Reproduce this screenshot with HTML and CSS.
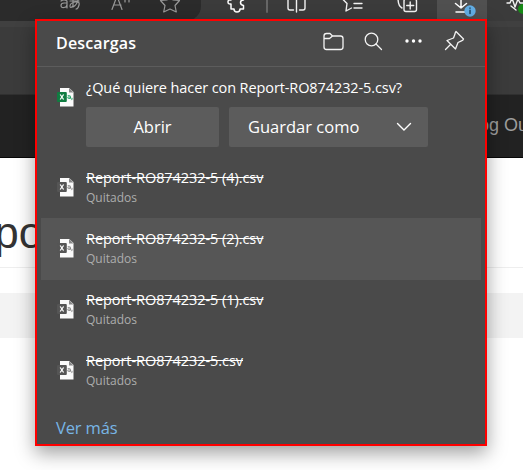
FILE: index.html
```html
<!DOCTYPE html>
<html lang="es">
<head>
<meta charset="utf-8">
<title>Descargas</title>
<link rel="stylesheet" href="styles.css">
</head>
<body>
<svg class="defs" width="0" height="0">
  <defs>
    <symbol id="file" viewBox="0 0 18 20">
      <path d="M3 1h9.200L16.500 5v14.500H3z" fill="#fafafa"/>
      <path d="M12 1v4.500h4.500z" fill="#888"/>
      <rect class="tile" x="0" y="5" width="9.800" height="10" rx="1"/>
      <path d="m3.200 7.500 3.400 5M6.600 7.500l-3.400 5" stroke="#fff" stroke-width="1.300"/>
      <path class="mark" d="M10.700 8.700h2q.8 0 .8.8v1.900h-2q-.8 0-.8-.7t.8-.7h1.800M15 10.800v1.400l-.6.900" fill="none"/>
    </symbol>
  </defs>
</svg>
<div class="browser">
  <div class="toolbar">
    <div class="address"></div>
    <svg class="tools" width="523" height="22" viewBox="0 0 523 22" fill="none" stroke-linecap="round" stroke-linejoin="round">
      <g stroke="#999" stroke-width="1.2">
        <path d="M61 1q3-2 6 0v7M67 3h-3q-3 0-3 2.500t3 2q3 0 3-3M70 1h9M73-2v8q-3 3-3 0t5-4 4 3-3 4M78 0q-1 5-5 7"/>
        <path d="M112 9.500 117-4l5 13.500M114 5h7M125-1v3M129-1v3"/>
        <path d="m170-6 3 6 6.500.500-4.500 5 1.300 6.500L170 9l-6.300 3 1.300-6.500-4.500-5L167 0z"/>
      </g>
      <path d="M231-2v2q-3-.500-3 2t3 2v5h3q0 3 3 3t3-3h3.500V5.500q-3-.500-3-3t3-2.500v-2" stroke="#fff" stroke-width="1.500"/>
      <path d="M267-2v14" stroke="#666" stroke-width="2"/>
      <g stroke="#f2f2f2" stroke-width="1.400">
        <path d="M293.500 10H290q-2 0-2-2V-2M299.500 10h3.500q2 0 2-2V-2M296.500-2v14"/>
        <path d="M342.500-1 347 3.500 346 11l5.500-3M353-1h9M354 3.500h8M354 8h8"/>
        <path d="M398-2q0 8 4 10"/><rect x="404" y="-1" width="12.500" height="12.500" rx="2"/><path d="M410.200 2v7M406.700 5.500h7"/>
      </g>
      <rect x="437" y="0" width="50" height="22" fill="#505050"/>
      <path d="M461-2v10M455.500 3.500 461 8l5.500-4.500M456 12h10" stroke="#fff" stroke-width="1.500"/>
      <circle cx="470" cy="11" r="5.700" fill="#62aee5"/><path d="M470 10.300v3.200M470 8v.200" stroke="#1c4664" stroke-width="1.500"/>
      <path d="M507 3h3l2-5 3 9 3-8 2 4h3M511 6l5 4" stroke="#f2f2f2" stroke-width="1.400"/>
      <circle cx="523" cy="9" r="5" fill="#168a16"/>
    </svg>
  </div>
  <div class="tabs"></div>
</div>
<div class="nav"><span>Log Out</span></div>
<div class="page">
  <h1>Reports</h1>
  <div class="band"></div>
</div>
<section class="panel">
  <header class="head">
    <h2>Descargas</h2>
    <svg width="150" height="26" viewBox="320 29 150 26" fill="none" stroke="#f4f4f4" stroke-width="1.300" stroke-linejoin="round" stroke-linecap="round">
      <path d="M324 36q0-2.500 2.500-2.500h3.500l2.500 2.500h8q2.500 0 2.500 2.500v8.500q0 2.500-2.500 2.500h-14q-2.500 0-2.500-2.500zM324 38.500h5.500l3-2.500"/>
      <circle cx="371.500" cy="39.500" r="6.300"/><path d="m376 44 5.500 5.500"/>
      <g fill="#fff" stroke="none"><circle cx="407" cy="41" r="1.700"/><circle cx="413.500" cy="41" r="1.700"/><circle cx="420" cy="41" r="1.700"/></g>
      <path d="m456 31.500 7.500 7.500q-.500 1.500-2 1.800l-3.500 1.700-2.500 6.500-8.500-8.500 6.500-2.500 1.500-4q.200-1.700 1-2.500zM450.500 44.500 445.500 49.500"/>
    </svg>
  </header>
  <div class="item prompt">
    <svg class="icon green" width="18" height="20"><use href="#file"/></svg>
    <div class="body">
      <p class="name">¿Qué quiere hacer con Report-RO874232-5.csv?</p>
      <div class="buttons">
        <button class="open"><span>Abrir</span></button>
        <button class="save"><span>Guardar como</span><svg width="16" height="10" fill="none" stroke="#fff" stroke-width="1.400" stroke-linecap="round"><path d="m1.500 1.500 6.500 6.500 6.500-6.500"/></svg></button>
      </div>
    </div>
  </div>
  <div class="item"><svg class="icon" width="18" height="20"><use href="#file"/></svg><div class="body"><p class="name"><s>Report-RO874232-5 (4).csv</s></p><p class="state">Quitados</p></div></div>
  <div class="item hover"><svg class="icon" width="18" height="20"><use href="#file"/></svg><div class="body"><p class="name"><s>Report-RO874232-5 (2).csv</s></p><p class="state">Quitados</p></div></div>
  <div class="item"><svg class="icon" width="18" height="20"><use href="#file"/></svg><div class="body"><p class="name"><s>Report-RO874232-5 (1).csv</s></p><p class="state">Quitados</p></div></div>
  <div class="item"><svg class="icon" width="18" height="20"><use href="#file"/></svg><div class="body"><p class="name"><s>Report-RO874232-5.csv</s></p><p class="state">Quitados</p></div></div>
  <a class="more">Ver más</a>
</section>
</body>
</html>
```
FILE: styles.css
```css
* { box-sizing: border-box; }
body { margin: 0; width: 523px; height: 470px; overflow: hidden; position: relative; background: #fff; font-family: "Open Sans", "Noto Sans", sans-serif; color: #fff; }
h1, h2, p { margin: 0; }
.defs { position: absolute; }
.toolbar { height: 21px; background: #3b3b3b; position: relative; }
.address { width: 201px; height: 21px; background: #2b2b2b; border-bottom-right-radius: 15px; }
.tools { position: absolute; left: 0; top: 0; }
.tabs { height: 73px; background: #3b3b3b; border-top: 6px solid #404040; }
.nav { height: 64px; background: #222; border-top: 1px solid #303030; border-bottom: 1px solid #080808; padding: 18px 0 0 469px; font: 18px/24px "Liberation Sans", sans-serif; color: #9d9d9d; white-space: nowrap; }
.page h1 { height: 110px; border-bottom: 1px solid #eee; margin-left: -62px; font: 500 44px/54px "Liberation Sans", sans-serif; padding: 48px 0 0; color: #333; }
.band { height: 45px; margin-top: 25px; background: #f3f3f3; }
.panel { position: absolute; left: 35px; top: 19px; width: 452px; height: 427px; border: 2px solid #f00; background: #4a4a4a; box-shadow: 0 7px 18px rgba(0, 0, 0, .38); }
.head { height: 46px; border-bottom: 1px solid #5c5c5c; display: flex; justify-content: space-between; padding: 8px 15px 0 19px; }
.head h2 { font-size: 16px; line-height: 28px; font-weight: 600; letter-spacing: .15px; }
.item { height: 61px; margin: 0 4px; padding: 10px 0 0 16px; display: flex; gap: 11px; }
.hover { background: #565656; box-shadow: 0 1px #565656; }
.prompt { height: 90px; }
.icon { --mark: #888; flex: none; margin-top: 10px; fill: #555; }
.green { --mark: #21a366; fill: #107c41; margin-top: 10px; }
.mark { stroke: var(--mark); stroke-width: 1; }
.name { font-size: 14.5px; line-height: 22px; letter-spacing: -.06px; white-space: nowrap; }
.prompt .name { letter-spacing: -.1px; }
.state { font-size: 12px; line-height: 18px; color: #adadad; }
.buttons { display: flex; gap: 10px; margin-top: 8px; }
button { height: 40px; padding: 0; border: 0; border-radius: 2px; background: #5c5c5c; color: #fff; font: 16.5px/40px "Open Sans", sans-serif; }
.open { width: 133px; }
.save { width: 199px; display: flex; align-items: center; justify-content: space-between; padding: 0 16px 0 19px; }
.more { display: block; padding: 15px 0 0 19px; font-size: 16.5px; letter-spacing: -.15px; line-height: 24px; color: #78b5e5; }
```
